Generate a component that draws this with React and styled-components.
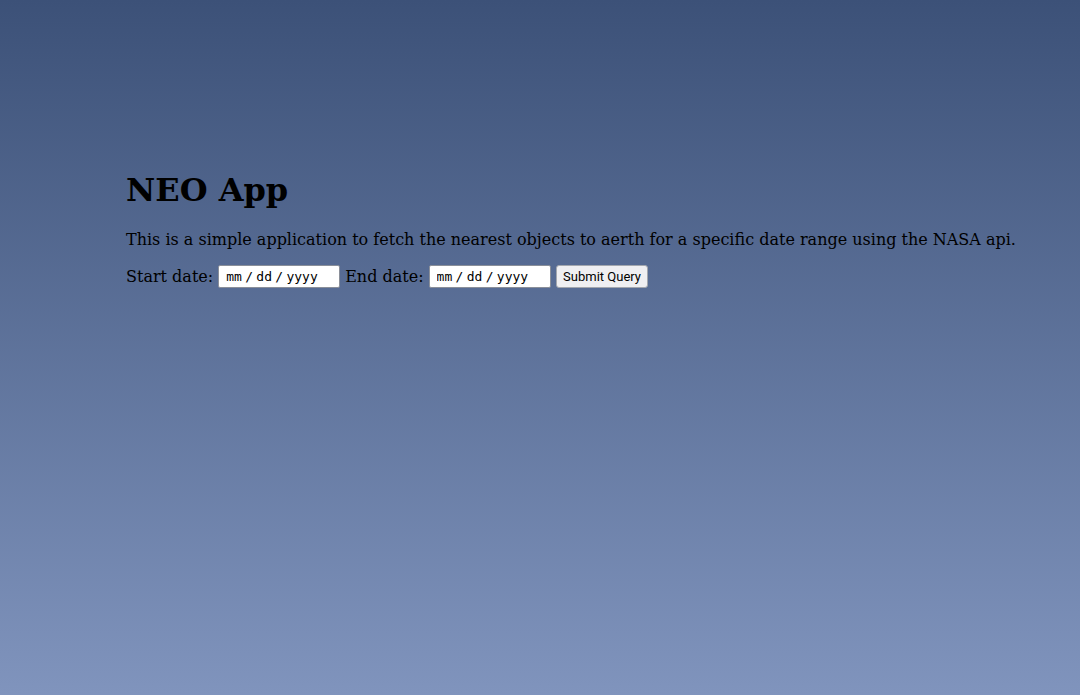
import React, { useState } from 'react'
import styled, { createGlobalStyle } from 'styled-components'

const GlobalStyle = createGlobalStyle`
  html, body {
    margin: 0;
    height: 100%;
  }
  body {
    font-family: "DejaVu Serif", serif;
    background: linear-gradient(to bottom, #3c5178 0%, #8094bd 100%);
    min-height: 695px;
  }
`

const Page = styled.main`
  padding: 150px 40px 0 126px;
`

const Title = styled.h1`
  font-size: 32px;
  font-weight: bold;
  margin: 21px 0;
  color: #000;
`

const Intro = styled.p`
  font-size: 16px;
  margin: 0 0 16px;
  color: #000;
`

const QueryForm = styled.form`
  display: flex;
  align-items: center;
  gap: 5px;
  font-size: 16px;
  color: #000;
`

const Field = styled.label`
  display: flex;
  align-items: center;
  gap: 5px;
`

// placeholder mimics chrome's date field: mono digits, thin spaces round the slashes
const DateInput = styled.input`
  box-sizing: border-box;
  width: 122px;
  height: 23px;
  padding: 0 7px;
  border: 1px solid #8a8f99;
  border-radius: 2px;
  background: #fff;
  font-family: "DejaVu Sans Mono", monospace;
  font-size: 13px;
  word-spacing: -4.5px;
  color: #000;

  &::placeholder {
    color: #000;
    opacity: 1;
  }
`

const SubmitButton = styled.button`
  box-sizing: border-box;
  height: 23px;
  padding: 0 6.5px;
  border: 1px solid #a3a7ae;
  border-radius: 3px;
  background: #efeff2;
  font-family: Roboto, "Liberation Sans", sans-serif;
  font-size: 13px;
  color: #000;
`

const App = () => {
  const [start, setStart] = useState('')
  const [end, setEnd] = useState('')

  return (
    <>
      <GlobalStyle />
      <Page>
        <Title>NEO App</Title>
        <Intro>
          This is a simple application to fetch the nearest objects to aerth for a specific date range using the NASA api.
        </Intro>
        <QueryForm onSubmit={(e) => e.preventDefault()}>
          <Field>
            Start date:
            <DateInput placeholder="mm / dd / yyyy" value={start} onChange={(e) => setStart(e.target.value)} />
          </Field>
          <Field>
            End date:
            <DateInput placeholder="mm / dd / yyyy" value={end} onChange={(e) => setEnd(e.target.value)} />
          </Field>
          <SubmitButton type="submit">Submit Query</SubmitButton>
        </QueryForm>
      </Page>
    </>
  )
}

export default App
